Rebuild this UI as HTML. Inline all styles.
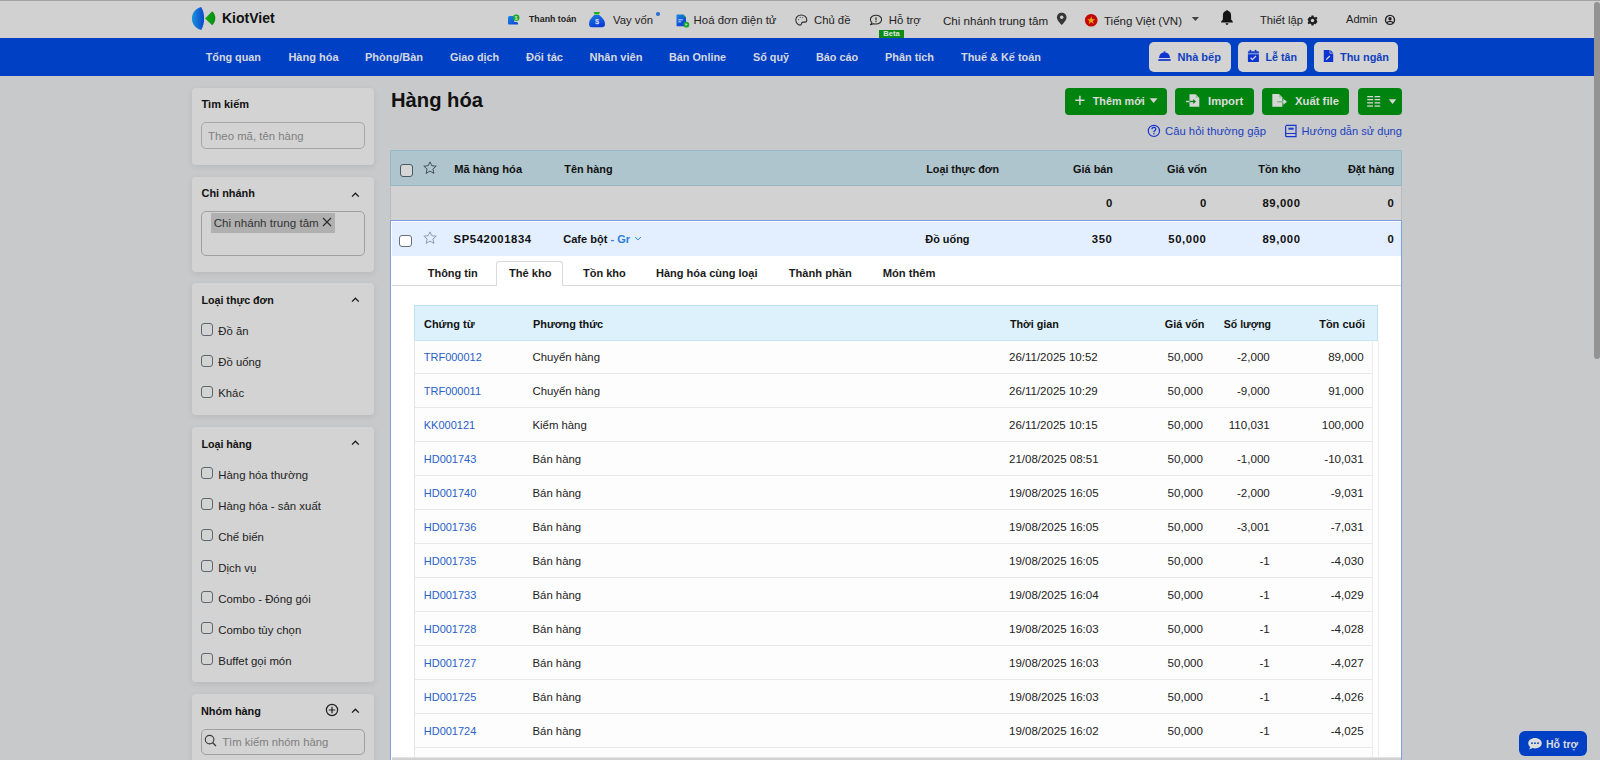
<!DOCTYPE html><html><head><meta charset="utf-8"><title>Hàng hóa</title><style>
*{box-sizing:border-box}
html,body{margin:0;padding:0;width:1600px;height:760px;overflow:hidden;background:#c8c9cb;font-family:"Liberation Sans",sans-serif}
.t{position:absolute;white-space:nowrap;line-height:20px}
.a{position:absolute}
svg{position:absolute;overflow:visible}
</style></head><body>
<div style="position:absolute;left:0px;top:0px;width:1600px;height:38px;background:#d1d1d1"></div>
<div style="position:absolute;left:0px;top:0px;width:1600px;height:1px;background:#a2a3a3"></div>
<svg style="left:191px;top:7px" width="26" height="24" viewBox="0 0 26 24"><defs><linearGradient id="lg" x1="0" y1="0" x2="1" y2="0"><stop offset="0" stop-color="#1a94d8"/><stop offset="1" stop-color="#0a45d0"/></linearGradient><linearGradient id="lg2" x1="0" y1="0" x2="1" y2="0"><stop offset="0" stop-color="#12b012"/><stop offset="1" stop-color="#088a12"/></linearGradient></defs><path d="M10.2 -0.1 C4.2 1.6 0.9 6.2 0.9 11.6 C0.9 17 4.2 21.4 10.2 23 C12.3 19.6 13.1 15.6 13.1 11.5 C13.1 7.4 12.3 3.4 10.2 -0.1Z" fill="url(#lg)"/><path d="M14 11.4 L21.2 4.2 C23.2 6 24.3 8.6 24.3 11.3 C24.3 14 23.2 16.5 21.2 18.3Z" fill="url(#lg2)"/></svg>
<div class="t" style="left:222px;top:7.75px;font-size:14px;font-weight:700;color:#111;">KiotViet</div>
<div class="t" style="left:529px;top:8.95px;font-size:8.8px;font-weight:700;color:#222;">Thanh toán</div>
<div class="t" style="left:613px;top:9.58px;font-size:11.3px;font-weight:400;color:#222;">Vay vốn</div>
<div class="t" style="left:693.6px;top:10.25px;font-size:11.4px;font-weight:400;color:#222;">Hoá đơn điện tử</div>
<div class="t" style="left:814px;top:10.28px;font-size:11.3px;font-weight:400;color:#222;">Chủ đề</div>
<div class="t" style="left:888.7px;top:10.25px;font-size:11.4px;font-weight:400;color:#222;">Hỗ trợ</div>
<div style="position:absolute;left:879px;top:30px;width:25px;height:8.4px;background:#0b8a16"></div>
<div class="t" style="left:879px;top:24.37px;font-size:7.6px;font-weight:700;color:#dfe9df;width:25px;text-align:center">Beta</div>
<div class="t" style="left:943px;top:10.58px;font-size:11.6px;font-weight:400;color:#222;">Chi nhánh trung tâm</div>
<div class="t" style="left:1104px;top:10.62px;font-size:11.5px;font-weight:400;color:#222;">Tiếng Việt (VN)</div>
<div class="t" style="left:1260px;top:10.32px;font-size:11.2px;font-weight:400;color:#222;">Thiết lập</div>
<div class="t" style="left:1346px;top:9.15px;font-size:11.1px;font-weight:400;color:#222;">Admin</div>
<div style="position:absolute;left:0px;top:38.4px;width:1600px;height:37.3px;background:#0040c4"></div>
<div class="t" style="left:205.7px;top:47.26px;font-size:10.8px;font-weight:700;color:#d6d8e0;">Tổng quan</div>
<div class="t" style="left:288.4px;top:47.19px;font-size:11px;font-weight:700;color:#d6d8e0;">Hàng hóa</div>
<div class="t" style="left:365px;top:47.19px;font-size:11px;font-weight:700;color:#d6d8e0;">Phòng/Bàn</div>
<div class="t" style="left:450px;top:47.28px;font-size:10.75px;font-weight:700;color:#d6d8e0;">Giao dịch</div>
<div class="t" style="left:526px;top:47.15px;font-size:11.1px;font-weight:700;color:#d6d8e0;">Đối tác</div>
<div class="t" style="left:589.5px;top:47.15px;font-size:11.1px;font-weight:700;color:#d6d8e0;">Nhân viên</div>
<div class="t" style="left:669px;top:47.26px;font-size:10.8px;font-weight:700;color:#d6d8e0;">Bán Online</div>
<div class="t" style="left:753px;top:47.26px;font-size:10.8px;font-weight:700;color:#d6d8e0;">Sổ quỹ</div>
<div class="t" style="left:816px;top:47.26px;font-size:10.8px;font-weight:700;color:#d6d8e0;">Báo cáo</div>
<div class="t" style="left:885px;top:47.22px;font-size:10.9px;font-weight:700;color:#d6d8e0;">Phân tích</div>
<div class="t" style="left:961px;top:47.22px;font-size:10.9px;font-weight:700;color:#d6d8e0;">Thuế &amp; Kế toán</div>
<div style="position:absolute;left:1149px;top:42px;width:82px;height:30px;background:#d3d3d3;border-radius:5px"></div>
<div style="position:absolute;left:1238px;top:42px;width:69px;height:30px;background:#d3d3d3;border-radius:5px"></div>
<div style="position:absolute;left:1314px;top:42px;width:84px;height:30px;background:#d3d3d3;border-radius:5px"></div>
<div class="t" style="left:1177.5px;top:47.19px;font-size:11px;font-weight:700;color:#0f3fc0;">Nhà bếp</div>
<div class="t" style="left:1265.5px;top:47.29px;font-size:10.7px;font-weight:700;color:#0f3fc0;">Lễ tân</div>
<div class="t" style="left:1340px;top:47.22px;font-size:10.9px;font-weight:700;color:#0f3fc0;">Thu ngân</div>
<div style="position:absolute;left:1594px;top:1.5px;width:6px;height:357.3px;background:#939393;border-radius:3px"></div>
<div style="position:absolute;left:192px;top:87.5px;width:182px;height:77.5px;background:#d3d3d3;border-radius:4px;box-shadow:0 2px 6px rgba(0,0,0,0.08)"></div>
<div style="position:absolute;left:192px;top:177px;width:182px;height:94.5px;background:#d3d3d3;border-radius:4px;box-shadow:0 2px 6px rgba(0,0,0,0.08)"></div>
<div style="position:absolute;left:192px;top:283.2px;width:182px;height:131.5px;background:#d3d3d3;border-radius:4px;box-shadow:0 2px 6px rgba(0,0,0,0.08)"></div>
<div style="position:absolute;left:192px;top:426.7px;width:182px;height:255.3px;background:#d3d3d3;border-radius:4px;box-shadow:0 2px 6px rgba(0,0,0,0.08)"></div>
<div style="position:absolute;left:192px;top:693.7px;width:182px;height:106.29999999999995px;background:#d3d3d3;border-radius:4px;box-shadow:0 2px 6px rgba(0,0,0,0.08)"></div>
<div class="t" style="left:201.4px;top:94.19px;font-size:11px;font-weight:700;color:#111;">Tìm kiếm</div>
<div style="position:absolute;left:201px;top:122px;width:164px;height:27px;border:1px solid #a6a6a6;border-radius:5px"></div>
<div class="t" style="left:208px;top:125.95px;font-size:11.4px;font-weight:400;color:#808080;">Theo mã, tên hàng</div>
<div class="t" style="left:201.6px;top:183.42px;font-size:10.9px;font-weight:700;color:#111;">Chi nhánh</div>
<div style="position:absolute;left:201px;top:211px;width:164px;height:45px;border:1px solid #a0a0a0;border-radius:5px"></div>
<div style="position:absolute;left:211px;top:213.4px;width:124px;height:19.3px;background:#b0b0b0"></div>
<div class="t" style="left:213.7px;top:213.48px;font-size:11.6px;font-weight:400;color:#333;">Chi nhánh trung tâm</div>
<div class="t" style="left:201.4px;top:290.49px;font-size:10.7px;font-weight:700;color:#111;">Loại thực đơn</div>
<div style="position:absolute;left:201px;top:323.4px;width:12.2px;height:12.2px;border:1.1px solid #5f6670;border-radius:3px"></div>
<div class="t" style="left:218.3px;top:320.68px;font-size:11.3px;font-weight:400;color:#222;">Đồ ăn</div>
<div style="position:absolute;left:201px;top:354.59999999999997px;width:12.2px;height:12.2px;border:1.1px solid #5f6670;border-radius:3px"></div>
<div class="t" style="left:218.3px;top:351.88px;font-size:11.3px;font-weight:400;color:#222;">Đồ uống</div>
<div style="position:absolute;left:201px;top:385.79999999999995px;width:12.2px;height:12.2px;border:1.1px solid #5f6670;border-radius:3px"></div>
<div class="t" style="left:218.3px;top:383.08px;font-size:11.3px;font-weight:400;color:#222;">Khác</div>
<div class="t" style="left:201.4px;top:433.69px;font-size:10.7px;font-weight:700;color:#111;">Loại hàng</div>
<div style="position:absolute;left:201px;top:467.3px;width:12.2px;height:12.2px;border:1.1px solid #5f6670;border-radius:3px"></div>
<div class="t" style="left:218.3px;top:464.55px;font-size:11.4px;font-weight:400;color:#222;">Hàng hóa thường</div>
<div style="position:absolute;left:201px;top:498.3px;width:12.2px;height:12.2px;border:1.1px solid #5f6670;border-radius:3px"></div>
<div class="t" style="left:218.3px;top:495.55px;font-size:11.4px;font-weight:400;color:#222;">Hàng hóa - sản xuất</div>
<div style="position:absolute;left:201px;top:529.3px;width:12.2px;height:12.2px;border:1.1px solid #5f6670;border-radius:3px"></div>
<div class="t" style="left:218.3px;top:526.55px;font-size:11.4px;font-weight:400;color:#222;">Chế biến</div>
<div style="position:absolute;left:201px;top:560.3px;width:12.2px;height:12.2px;border:1.1px solid #5f6670;border-radius:3px"></div>
<div class="t" style="left:218.3px;top:557.55px;font-size:11.4px;font-weight:400;color:#222;">Dịch vụ</div>
<div style="position:absolute;left:201px;top:591.3px;width:12.2px;height:12.2px;border:1.1px solid #5f6670;border-radius:3px"></div>
<div class="t" style="left:218.3px;top:588.55px;font-size:11.4px;font-weight:400;color:#222;">Combo - Đóng gói</div>
<div style="position:absolute;left:201px;top:622.3px;width:12.2px;height:12.2px;border:1.1px solid #5f6670;border-radius:3px"></div>
<div class="t" style="left:218.3px;top:619.55px;font-size:11.4px;font-weight:400;color:#222;">Combo tùy chọn</div>
<div style="position:absolute;left:201px;top:653.3px;width:12.2px;height:12.2px;border:1.1px solid #5f6670;border-radius:3px"></div>
<div class="t" style="left:218.3px;top:650.55px;font-size:11.4px;font-weight:400;color:#222;">Buffet gọi món</div>
<div class="t" style="left:201px;top:701.22px;font-size:10.9px;font-weight:700;color:#111;">Nhóm hàng</div>
<div style="position:absolute;left:201px;top:728.6px;width:164px;height:26px;border:1px solid #a0a0a0;border-radius:5px"></div>
<div class="t" style="left:222.2px;top:731.58px;font-size:11.3px;font-weight:400;color:#808080;">Tìm kiếm nhóm hàng</div>
<div class="t" style="left:391px;top:90.10px;font-size:20.2px;font-weight:700;color:#111;">Hàng hóa</div>
<div style="position:absolute;left:1065px;top:88px;width:102px;height:27px;background:#01840f;border-radius:4px"></div>
<div style="position:absolute;left:1175px;top:88px;width:79px;height:27px;background:#01840f;border-radius:4px"></div>
<div style="position:absolute;left:1262px;top:88px;width:87px;height:27px;background:#01840f;border-radius:4px"></div>
<div style="position:absolute;left:1358px;top:88px;width:44px;height:27px;background:#01840f;border-radius:4px"></div>
<div class="t" style="left:1092.75px;top:90.86px;font-size:10.8px;font-weight:700;color:#dcdcdc;">Thêm mới</div>
<div class="t" style="left:1208px;top:90.68px;font-size:11.3px;font-weight:700;color:#dcdcdc;">Import</div>
<div class="t" style="left:1295px;top:90.68px;font-size:11.3px;font-weight:700;color:#dcdcdc;">Xuất file</div>
<div class="t" style="left:1165px;top:120.58px;font-size:11.3px;font-weight:400;color:#1b3fc0;">Câu hỏi thường gặp</div>
<div class="t" style="left:1301.5px;top:120.65px;font-size:11.1px;font-weight:400;color:#1b3fc0;">Hướng dẫn sử dụng</div>
<div style="position:absolute;left:390px;top:150px;width:1012px;height:36px;background:#aec5cd;border:1px solid #98b8c8"></div>
<div style="position:absolute;left:390px;top:186px;width:1012px;height:34px;background:#d2d2d2;border-left:1px solid #bcbcbc;border-right:1px solid #bcbcbc"></div>
<div style="position:absolute;left:400px;top:164px;width:12.6px;height:12.6px;border:1.2px solid #4b5866;border-radius:3px;background:#d6d6d6"></div>
<div class="t" style="left:454.25px;top:158.65px;font-size:11.1px;font-weight:700;color:#111;">Mã hàng hóa</div>
<div class="t" style="left:564.25px;top:158.74px;font-size:10.86px;font-weight:700;color:#111;">Tên hàng</div>
<div class="t" style="left:926.3px;top:158.88px;font-size:10.74px;font-weight:700;color:#111;">Loại thực đơn</div>
<div class="t" style="right:487px;top:158.62px;font-size:10.9px;font-weight:700;color:#111;">Giá bán</div>
<div class="t" style="right:393px;top:158.62px;font-size:10.9px;font-weight:700;color:#111;">Giá vốn</div>
<div class="t" style="right:299.4000000000001px;top:158.62px;font-size:10.9px;font-weight:700;color:#111;">Tồn kho</div>
<div class="t" style="right:205.5px;top:158.62px;font-size:10.9px;font-weight:700;color:#111;">Đặt hàng</div>
<div class="t" style="right:487px;top:192.88px;font-size:11.3px;font-weight:700;color:#111;letter-spacing:0.6px">0</div>
<div class="t" style="right:393px;top:192.88px;font-size:11.3px;font-weight:700;color:#111;letter-spacing:0.6px">0</div>
<div class="t" style="right:299.4000000000001px;top:192.88px;font-size:11.3px;font-weight:700;color:#111;letter-spacing:0.6px">89,000</div>
<div class="t" style="right:205.5px;top:192.88px;font-size:11.3px;font-weight:700;color:#111;letter-spacing:0.6px">0</div>
<div style="position:absolute;left:390px;top:220px;width:1012px;height:540px;background:#fff;border:1.5px solid #7d9ee0;border-bottom:none"></div>
<div style="position:absolute;left:391.5px;top:221.5px;width:1009px;height:34.5px;background:#e3efff"></div>
<div style="position:absolute;left:399px;top:234.8px;width:12.6px;height:12.6px;border:1.2px solid #656f7b;border-radius:3px;background:#fff"></div>
<div class="t" style="left:453.5px;top:228.58px;font-size:11.3px;font-weight:700;color:#111;letter-spacing:0.6px">SP542001834</div>
<div class="t" style="left:563.25px;top:228.67px;font-size:11.06px;font-weight:700;color:#111;">Cafe bột <span style="color:#2f7fd8">- Gr</span></div>
<div class="t" style="left:925.3px;top:228.92px;font-size:10.9px;font-weight:700;color:#111;">Đồ uống</div>
<div class="t" style="right:487.5px;top:229.08px;font-size:11.3px;font-weight:700;color:#111;letter-spacing:0.6px">350</div>
<div class="t" style="right:393.5px;top:229.08px;font-size:11.3px;font-weight:700;color:#111;letter-spacing:0.6px">50,000</div>
<div class="t" style="right:299.4000000000001px;top:229.08px;font-size:11.3px;font-weight:700;color:#111;letter-spacing:0.6px">89,000</div>
<div class="t" style="right:205.5px;top:229.08px;font-size:11.3px;font-weight:700;color:#111;letter-spacing:0.6px">0</div>
<div style="position:absolute;left:391.5px;top:285px;width:1009px;height:1px;background:#dadada"></div>
<div style="position:absolute;left:496.4px;top:260.6px;width:67px;height:25.4px;background:#fff;border:1px solid #dadada;border-bottom:none;border-radius:3px 3px 0 0"></div>
<div class="t" style="left:427.7px;top:262.59px;font-size:11px;font-weight:700;color:#1a1a1a;">Thông tin</div>
<div class="t" style="left:509px;top:262.55px;font-size:11.1px;font-weight:700;color:#1a1a1a;">Thẻ kho</div>
<div class="t" style="left:583px;top:262.59px;font-size:11px;font-weight:700;color:#1a1a1a;">Tồn kho</div>
<div class="t" style="left:656px;top:262.59px;font-size:11px;font-weight:700;color:#1a1a1a;">Hàng hóa cùng loại</div>
<div class="t" style="left:788.8px;top:262.55px;font-size:11.1px;font-weight:700;color:#1a1a1a;">Thành phần</div>
<div class="t" style="left:882.7px;top:262.52px;font-size:11.2px;font-weight:700;color:#1a1a1a;">Món thêm</div>
<div style="position:absolute;left:415px;top:340px;width:957px;height:417px;background:#fdfdfd"></div>
<div style="position:absolute;left:414px;top:305px;width:964px;height:35.5px;background:#dcf1fb;border:1px solid #bfe0f0;border-bottom-color:#c8e4f0"></div>
<div style="position:absolute;left:414px;top:340px;width:1px;height:420px;background:#e6e6e6"></div>
<div style="position:absolute;left:1371.5px;top:340px;width:1px;height:420px;background:#ececec"></div>
<div class="t" style="left:424px;top:313.60px;font-size:10.97px;font-weight:700;color:#111;">Chứng từ</div>
<div class="t" style="left:533px;top:313.62px;font-size:10.9px;font-weight:700;color:#111;">Phương thức</div>
<div class="t" style="left:1010px;top:313.88px;font-size:10.74px;font-weight:700;color:#111;">Thời gian</div>
<div class="t" style="right:395.5px;top:313.84px;font-size:10.85px;font-weight:700;color:#111;">Giá vốn</div>
<div class="t" style="right:329px;top:313.96px;font-size:10.5px;font-weight:700;color:#111;">Số lượng</div>
<div class="t" style="right:235px;top:313.79px;font-size:11px;font-weight:700;color:#111;">Tồn cuối</div>
<div style="position:absolute;left:415px;top:373px;width:956.5px;height:1px;background:#e8e8e8"></div>
<div class="t" style="left:423.75px;top:347.39px;font-size:11.0px;font-weight:400;color:#2a5fc8;">TRF000012</div>
<div class="t" style="left:532.5px;top:347.27px;font-size:11.35px;font-weight:400;color:#222;">Chuyển hàng</div>
<div class="t" style="left:1009px;top:347.22px;font-size:11.5px;font-weight:400;color:#222;">26/11/2025 10:52</div>
<div class="t" style="right:397px;top:347.18px;font-size:11.6px;font-weight:400;color:#222;">50,000</div>
<div class="t" style="right:330.20000000000005px;top:347.18px;font-size:11.6px;font-weight:400;color:#222;">-2,000</div>
<div class="t" style="right:236.4000000000001px;top:347.18px;font-size:11.6px;font-weight:400;color:#222;">89,000</div>
<div style="position:absolute;left:415px;top:407px;width:956.5px;height:1px;background:#e8e8e8"></div>
<div class="t" style="left:423.75px;top:381.39px;font-size:11.0px;font-weight:400;color:#2a5fc8;">TRF000011</div>
<div class="t" style="left:532.5px;top:381.27px;font-size:11.35px;font-weight:400;color:#222;">Chuyển hàng</div>
<div class="t" style="left:1009px;top:381.22px;font-size:11.5px;font-weight:400;color:#222;">26/11/2025 10:29</div>
<div class="t" style="right:397px;top:381.18px;font-size:11.6px;font-weight:400;color:#222;">50,000</div>
<div class="t" style="right:330.20000000000005px;top:381.18px;font-size:11.6px;font-weight:400;color:#222;">-9,000</div>
<div class="t" style="right:236.4000000000001px;top:381.18px;font-size:11.6px;font-weight:400;color:#222;">91,000</div>
<div style="position:absolute;left:415px;top:441px;width:956.5px;height:1px;background:#e8e8e8"></div>
<div class="t" style="left:423.75px;top:415.39px;font-size:11.0px;font-weight:400;color:#2a5fc8;">KK000121</div>
<div class="t" style="left:532.5px;top:415.27px;font-size:11.35px;font-weight:400;color:#222;">Kiểm hàng</div>
<div class="t" style="left:1009px;top:415.22px;font-size:11.5px;font-weight:400;color:#222;">26/11/2025 10:15</div>
<div class="t" style="right:397px;top:415.18px;font-size:11.6px;font-weight:400;color:#222;">50,000</div>
<div class="t" style="right:330.20000000000005px;top:415.18px;font-size:11.6px;font-weight:400;color:#222;">110,031</div>
<div class="t" style="right:236.4000000000001px;top:415.18px;font-size:11.6px;font-weight:400;color:#222;">100,000</div>
<div style="position:absolute;left:415px;top:475px;width:956.5px;height:1px;background:#e8e8e8"></div>
<div class="t" style="left:423.75px;top:449.39px;font-size:11.0px;font-weight:400;color:#2a5fc8;">HD001743</div>
<div class="t" style="left:532.5px;top:449.27px;font-size:11.35px;font-weight:400;color:#222;">Bán hàng</div>
<div class="t" style="left:1009px;top:449.22px;font-size:11.5px;font-weight:400;color:#222;">21/08/2025 08:51</div>
<div class="t" style="right:397px;top:449.18px;font-size:11.6px;font-weight:400;color:#222;">50,000</div>
<div class="t" style="right:330.20000000000005px;top:449.18px;font-size:11.6px;font-weight:400;color:#222;">-1,000</div>
<div class="t" style="right:236.4000000000001px;top:449.18px;font-size:11.6px;font-weight:400;color:#222;">-10,031</div>
<div style="position:absolute;left:415px;top:509px;width:956.5px;height:1px;background:#e8e8e8"></div>
<div class="t" style="left:423.75px;top:483.39px;font-size:11.0px;font-weight:400;color:#2a5fc8;">HD001740</div>
<div class="t" style="left:532.5px;top:483.27px;font-size:11.35px;font-weight:400;color:#222;">Bán hàng</div>
<div class="t" style="left:1009px;top:483.22px;font-size:11.5px;font-weight:400;color:#222;">19/08/2025 16:05</div>
<div class="t" style="right:397px;top:483.18px;font-size:11.6px;font-weight:400;color:#222;">50,000</div>
<div class="t" style="right:330.20000000000005px;top:483.18px;font-size:11.6px;font-weight:400;color:#222;">-2,000</div>
<div class="t" style="right:236.4000000000001px;top:483.18px;font-size:11.6px;font-weight:400;color:#222;">-9,031</div>
<div style="position:absolute;left:415px;top:543px;width:956.5px;height:1px;background:#e8e8e8"></div>
<div class="t" style="left:423.75px;top:517.39px;font-size:11.0px;font-weight:400;color:#2a5fc8;">HD001736</div>
<div class="t" style="left:532.5px;top:517.27px;font-size:11.35px;font-weight:400;color:#222;">Bán hàng</div>
<div class="t" style="left:1009px;top:517.22px;font-size:11.5px;font-weight:400;color:#222;">19/08/2025 16:05</div>
<div class="t" style="right:397px;top:517.18px;font-size:11.6px;font-weight:400;color:#222;">50,000</div>
<div class="t" style="right:330.20000000000005px;top:517.18px;font-size:11.6px;font-weight:400;color:#222;">-3,001</div>
<div class="t" style="right:236.4000000000001px;top:517.18px;font-size:11.6px;font-weight:400;color:#222;">-7,031</div>
<div style="position:absolute;left:415px;top:577px;width:956.5px;height:1px;background:#e8e8e8"></div>
<div class="t" style="left:423.75px;top:551.39px;font-size:11.0px;font-weight:400;color:#2a5fc8;">HD001735</div>
<div class="t" style="left:532.5px;top:551.27px;font-size:11.35px;font-weight:400;color:#222;">Bán hàng</div>
<div class="t" style="left:1009px;top:551.22px;font-size:11.5px;font-weight:400;color:#222;">19/08/2025 16:05</div>
<div class="t" style="right:397px;top:551.18px;font-size:11.6px;font-weight:400;color:#222;">50,000</div>
<div class="t" style="right:330.20000000000005px;top:551.18px;font-size:11.6px;font-weight:400;color:#222;">-1</div>
<div class="t" style="right:236.4000000000001px;top:551.18px;font-size:11.6px;font-weight:400;color:#222;">-4,030</div>
<div style="position:absolute;left:415px;top:611px;width:956.5px;height:1px;background:#e8e8e8"></div>
<div class="t" style="left:423.75px;top:585.39px;font-size:11.0px;font-weight:400;color:#2a5fc8;">HD001733</div>
<div class="t" style="left:532.5px;top:585.27px;font-size:11.35px;font-weight:400;color:#222;">Bán hàng</div>
<div class="t" style="left:1009px;top:585.22px;font-size:11.5px;font-weight:400;color:#222;">19/08/2025 16:04</div>
<div class="t" style="right:397px;top:585.18px;font-size:11.6px;font-weight:400;color:#222;">50,000</div>
<div class="t" style="right:330.20000000000005px;top:585.18px;font-size:11.6px;font-weight:400;color:#222;">-1</div>
<div class="t" style="right:236.4000000000001px;top:585.18px;font-size:11.6px;font-weight:400;color:#222;">-4,029</div>
<div style="position:absolute;left:415px;top:645px;width:956.5px;height:1px;background:#e8e8e8"></div>
<div class="t" style="left:423.75px;top:619.39px;font-size:11.0px;font-weight:400;color:#2a5fc8;">HD001728</div>
<div class="t" style="left:532.5px;top:619.27px;font-size:11.35px;font-weight:400;color:#222;">Bán hàng</div>
<div class="t" style="left:1009px;top:619.22px;font-size:11.5px;font-weight:400;color:#222;">19/08/2025 16:03</div>
<div class="t" style="right:397px;top:619.18px;font-size:11.6px;font-weight:400;color:#222;">50,000</div>
<div class="t" style="right:330.20000000000005px;top:619.18px;font-size:11.6px;font-weight:400;color:#222;">-1</div>
<div class="t" style="right:236.4000000000001px;top:619.18px;font-size:11.6px;font-weight:400;color:#222;">-4,028</div>
<div style="position:absolute;left:415px;top:679px;width:956.5px;height:1px;background:#e8e8e8"></div>
<div class="t" style="left:423.75px;top:653.39px;font-size:11.0px;font-weight:400;color:#2a5fc8;">HD001727</div>
<div class="t" style="left:532.5px;top:653.27px;font-size:11.35px;font-weight:400;color:#222;">Bán hàng</div>
<div class="t" style="left:1009px;top:653.22px;font-size:11.5px;font-weight:400;color:#222;">19/08/2025 16:03</div>
<div class="t" style="right:397px;top:653.18px;font-size:11.6px;font-weight:400;color:#222;">50,000</div>
<div class="t" style="right:330.20000000000005px;top:653.18px;font-size:11.6px;font-weight:400;color:#222;">-1</div>
<div class="t" style="right:236.4000000000001px;top:653.18px;font-size:11.6px;font-weight:400;color:#222;">-4,027</div>
<div style="position:absolute;left:415px;top:713px;width:956.5px;height:1px;background:#e8e8e8"></div>
<div class="t" style="left:423.75px;top:687.39px;font-size:11.0px;font-weight:400;color:#2a5fc8;">HD001725</div>
<div class="t" style="left:532.5px;top:687.27px;font-size:11.35px;font-weight:400;color:#222;">Bán hàng</div>
<div class="t" style="left:1009px;top:687.22px;font-size:11.5px;font-weight:400;color:#222;">19/08/2025 16:03</div>
<div class="t" style="right:397px;top:687.18px;font-size:11.6px;font-weight:400;color:#222;">50,000</div>
<div class="t" style="right:330.20000000000005px;top:687.18px;font-size:11.6px;font-weight:400;color:#222;">-1</div>
<div class="t" style="right:236.4000000000001px;top:687.18px;font-size:11.6px;font-weight:400;color:#222;">-4,026</div>
<div style="position:absolute;left:415px;top:747px;width:956.5px;height:1px;background:#e8e8e8"></div>
<div class="t" style="left:423.75px;top:721.39px;font-size:11.0px;font-weight:400;color:#2a5fc8;">HD001724</div>
<div class="t" style="left:532.5px;top:721.27px;font-size:11.35px;font-weight:400;color:#222;">Bán hàng</div>
<div class="t" style="left:1009px;top:721.22px;font-size:11.5px;font-weight:400;color:#222;">19/08/2025 16:02</div>
<div class="t" style="right:397px;top:721.18px;font-size:11.6px;font-weight:400;color:#222;">50,000</div>
<div class="t" style="right:330.20000000000005px;top:721.18px;font-size:11.6px;font-weight:400;color:#222;">-1</div>
<div class="t" style="right:236.4000000000001px;top:721.18px;font-size:11.6px;font-weight:400;color:#222;">-4,025</div>
<div style="position:absolute;left:391.5px;top:756.5px;width:1009.5px;height:3.5px;background:linear-gradient(#e8e8e8,#d0d0d0 60%)"></div>
<div style="position:absolute;left:1377.5px;top:340px;width:1px;height:417px;background:#ececec"></div>
<div style="position:absolute;left:1519px;top:731px;width:68px;height:25px;background:#0040c4;border-radius:6px"></div>
<div class="t" style="left:1546px;top:733.86px;font-size:10.5px;font-weight:700;color:#dcdcdc;">Hỗ trợ</div>
<svg style="left:507px;top:14px" width="14" height="12" viewBox="0 0 14 12"><defs><linearGradient id="g1" x1="0" y1="0" x2="1" y2="1"><stop offset="0" stop-color="#1c86e6"/><stop offset="1" stop-color="#0b3fd6"/></linearGradient></defs><path d="M1 3.5 Q1 2 2.5 2 L5.5 2 Q7 2 7 3.5 L7 7 Q7 8 8 8 L9.5 8 Q11 8 11 9.5 L11 10 Q11 10.5 10.5 10.5 L2 10.5 Q1 10.5 1 9.5Z" fill="url(#g1)"/><circle cx="9.2" cy="3.8" r="3.2" fill="#16a526"/><text x="9.2" y="5.6" font-size="4.8" font-family="Liberation Sans" font-weight="700" fill="#cfe8cf" text-anchor="middle">$</text></svg>
<svg style="left:588px;top:11px" width="18" height="17" viewBox="0 0 18 17"><path d="M5.5 1 L12 1 L10.8 3.6 L6.7 3.6Z" fill="#1bb21b"/><path d="M6.3 4 L11.2 4 Q17 8.5 17 13 Q17 16.2 14 16.2 L4 16.2 Q1 16.2 1 13 Q1 8.5 6.3 4Z" fill="url(#g2)"/><defs><linearGradient id="g2" x1="0" y1="0" x2="0.3" y2="1"><stop offset="0" stop-color="#1b78e2"/><stop offset="1" stop-color="#0b40d4"/></linearGradient></defs><text x="9" y="13.4" font-size="7.5" font-family="Liberation Sans" font-weight="700" fill="#d5dcf0" text-anchor="middle">$</text></svg>
<svg style="left:655px;top:11px" width="6" height="6" viewBox="0 0 6 6"><circle cx="3" cy="3" r="2.1" fill="#2a6fd6"/></svg>
<svg style="left:675px;top:13px" width="16" height="16" viewBox="0 0 16 16"><path d="M1.5 2.5 Q1.5 1.6 2.5 1.6 L8.3 1.6 L11 4.3 L11 12.4 Q11 13.3 10 13.3 L2.5 13.3 Q1.5 13.3 1.5 12.4Z" fill="url(#g3)"/><defs><linearGradient id="g3" x1="0" y1="0" x2="0.6" y2="1"><stop offset="0" stop-color="#1b84e4"/><stop offset="1" stop-color="#0b3fd4"/></linearGradient></defs><path d="M8.3 1.6 L11 4.3 L8.3 4.3Z" fill="#18a52a"/><rect x="3.3" y="6.3" width="4.5" height="1" fill="#c9d6ee"/><rect x="3.3" y="8.3" width="2.8" height="1" fill="#c9d6ee"/><circle cx="11.4" cy="11.7" r="2.9" fill="#1ca92c"/><path d="M10.5 10.3 L12.6 11.5 L10.5 12.7Z" fill="#cde8cd"/></svg>
<svg style="left:795px;top:14px" width="13" height="12" viewBox="0 0 13 12"><path d="M6.3 0.9 C3 0.9 0.8 3.3 0.8 6.1 C0.8 9 3 11.1 5.2 11.1 C6.2 11.1 6.5 10.5 6.5 9.8 C6.5 8.7 7 8.1 8.2 8.1 L9.8 8.1 C11.2 8.1 11.8 7.2 11.8 5.9 C11.8 3 9.3 0.9 6.3 0.9Z" fill="none" stroke="#2a2a2a" stroke-width="1.05"/><circle cx="3.6" cy="5.6" r="0.6" fill="#555"/><circle cx="5.2" cy="3.4" r="0.6" fill="#555"/><circle cx="7.8" cy="3.6" r="0.6" fill="#555"/></svg>
<svg style="left:869px;top:14px" width="14" height="12" viewBox="0 0 14 12"><path d="M7 1.2 C3.8 1.2 1.4 3.2 1.4 5.6 C1.4 6.9 2 8 3 8.8 L1.4 10.8 L4.6 9.7 C5.4 9.95 6.2 10.05 7 10.05 C10.2 10.05 12.6 8 12.6 5.6 C12.6 3.2 10.2 1.2 7 1.2Z" fill="none" stroke="#2a2a2a" stroke-width="1.05" stroke-linejoin="round"/><rect x="6.45" y="3.2" width="1.1" height="3.2" fill="#3a2020"/><rect x="6.45" y="7.1" width="1.1" height="1.1" fill="#3a2020"/></svg>
<svg style="left:1056px;top:12px" width="12" height="14" viewBox="0 0 12 14"><path d="M5.7 0.8 C2.9 0.8 0.9 2.9 0.9 5.4 C0.9 8.3 5.7 12.9 5.7 12.9 C5.7 12.9 10.5 8.3 10.5 5.4 C10.5 2.9 8.5 0.8 5.7 0.8Z" fill="#363636"/><circle cx="5.7" cy="5.2" r="1.7" fill="#d1d1d1"/></svg>
<svg style="left:1084px;top:13px" width="14" height="14" viewBox="0 0 14 14"><circle cx="7.2" cy="7.3" r="6.3" fill="#c40606"/><path d="M7.2 3.3 L8.2 6.2 L11.2 6.2 L8.8 8 L9.7 10.9 L7.2 9.1 L4.7 10.9 L5.6 8 L3.2 6.2 L6.2 6.2Z" fill="#e2ae08"/></svg>
<svg style="left:1191px;top:16px" width="9" height="6" viewBox="0 0 9 6"><path d="M0.8 1 L8 1 L4.4 5Z" fill="#444"/></svg>
<svg style="left:1219px;top:9px" width="16" height="18" viewBox="0 0 16 18"><path d="M8 0.9 C8.5 0.9 8.8 1.3 8.8 1.8 C11.3 2.3 12.1 4.3 12.1 6.6 L12.1 10.4 L13.8 12.5 L13.8 13.4 L2.2 13.4 L2.2 12.5 L3.9 10.4 L3.9 6.6 C3.9 4.3 4.7 2.3 7.2 1.8 C7.2 1.3 7.5 0.9 8 0.9Z" fill="#141414"/><path d="M6.5 14.2 L9.5 14.2 Q9.3 16 8 16 Q6.7 16 6.5 14.2Z" fill="#141414"/></svg>
<svg style="left:1307px;top:15px" width="11" height="11" viewBox="0 0 11 11"><g transform="translate(5.5 5.5)"><path d="M-1 -5 L1 -5 L1.3 -3.6 L2.6 -3 L3.8 -3.8 L5 -2.4 L4 -1.3 L4.3 0 L5 1.3 L4 2.6 L3 3.8 L1.4 3.3 L1 5 L-1 5 L-1.3 3.6 L-2.6 3 L-3.8 3.8 L-5 2.4 L-4 1.3 L-4.3 0 L-5 -1.3 L-3.8 -2.6 L-3 -3.8 L-1.4 -3.3Z" fill="#1e1e1e"/><circle r="1.7" fill="#d1d1d1"/></g></svg>
<svg style="left:1384px;top:14px" width="12" height="12" viewBox="0 0 12 12"><circle cx="6" cy="5.9" r="4.5" fill="none" stroke="#222" stroke-width="1.4"/><circle cx="6" cy="4.7" r="1.7" fill="#222"/><path d="M2.9 8.9 Q3.8 7.4 6 7.4 Q8.2 7.4 9.1 8.9" fill="none" stroke="#222" stroke-width="1.3"/></svg>
<svg style="left:1157px;top:50px" width="15" height="12" viewBox="0 0 15 12"><rect x="6.6" y="1.4" width="1.8" height="1.4" fill="#0d33d0"/><path d="M2 8 Q2.5 2.6 7.5 2.6 Q12.5 2.6 13 8Z" fill="#0d33d0"/><rect x="1.3" y="9" width="12.4" height="2" rx="0.5" fill="#2a4ccc"/></svg>
<svg style="left:1247px;top:49px" width="13" height="14" viewBox="0 0 13 14"><rect x="2.6" y="0.9" width="1.6" height="2.2" fill="#0d33d0"/><rect x="7.8" y="0.9" width="1.6" height="2.2" fill="#0d33d0"/><rect x="0.9" y="2.3" width="11" height="2.2" rx="0.6" fill="#1a44cc"/><path d="M0.9 5.2 L11.9 5.2 L11.9 12.2 Q11.9 13.1 11 13.1 L1.8 13.1 Q0.9 13.1 0.9 12.2Z" fill="#0d33d0"/><path d="M3.6 8.8 L5.4 10.6 L9 7" fill="none" stroke="#d6d6e6" stroke-width="1.3"/></svg>
<svg style="left:1323px;top:49px" width="12" height="14" viewBox="0 0 12 14"><path d="M0.8 1 L6.6 1 L6.6 4.4 L10.2 4.4 L10.2 13 L0.8 13Z" fill="#0d33d0"/><path d="M7.3 1 L10.2 3.8 L7.3 3.8Z" fill="#0d33d0"/><path d="M3.2 10.6 L6.8 7" stroke="#d6d6e6" stroke-width="1.3"/></svg>
<svg style="left:1074px;top:95px" width="12" height="11" viewBox="0 0 12 11"><path d="M5.9 0.7 L5.9 9.9 M1.3 5.3 L10.5 5.3" stroke="#d6d6d6" stroke-width="1.5"/></svg>
<svg style="left:1149px;top:97px" width="9" height="7" viewBox="0 0 9 7"><path d="M0.7 1.2 L8.5 1.2 L4.6 5.9Z" fill="#d6d6d6"/></svg>
<svg style="left:1185px;top:93px" width="16" height="15" viewBox="0 0 16 15"><path d="M4.5 1.2 L10.6 1.2 L14.3 4.9 L14.3 13.8 L4.5 13.8 L4.5 9.3 L4.5 6.2Z" fill="#d6d6d6"/><path d="M10.6 1.2 L14.3 4.9 L10.6 4.9Z" fill="#9fc89f"/><path d="M1 8.5 L8.5 8.5" stroke="#d6d6d6" stroke-width="1.4"/><path d="M4.5 8.5 L9 8.5" stroke="#028117" stroke-width="1.4"/><path d="M8.3 6 L11 8.5 L8.3 11Z" fill="#028117"/></svg>
<svg style="left:1271px;top:93px" width="18" height="15" viewBox="0 0 18 15"><path d="M1.3 1 L7.9 1 L11.4 4.6 L11.4 13.7 L1.3 13.7Z" fill="#d6d6d6"/><path d="M7.9 1 L11.4 4.6 L7.9 4.6Z" fill="#9fc89f"/><path d="M6.2 8.8 L11.4 8.8" stroke="#7fb07f" stroke-width="1.3"/><path d="M11.4 8.8 L13 8.8" stroke="#d6d6d6" stroke-width="1.3"/><path d="M12.3 5.8 L16 8.8 L12.3 11.8Z" fill="#d6d6d6"/></svg>
<svg style="left:1366px;top:95px" width="16" height="13" viewBox="0 0 16 13"><g fill="#d6d6d6"><rect x="1.2" y="1" width="5.8" height="1.3"/><rect x="8.6" y="1" width="5.6" height="1.3"/><rect x="1.2" y="4" width="5.8" height="1.3"/><rect x="8.6" y="4" width="5.6" height="1.3"/><rect x="1.2" y="7.2" width="5.8" height="1.3"/><rect x="8.6" y="7.2" width="5.6" height="1.3"/><rect x="1.2" y="10.4" width="5.8" height="1.3"/><rect x="8.6" y="10.4" width="5.6" height="1.3"/></g></svg>
<svg style="left:1388px;top:98px" width="9" height="7" viewBox="0 0 9 7"><path d="M0.8 1.2 L8.3 1.2 L4.55 5.9Z" fill="#d6d6d6"/></svg>
<svg style="left:1147px;top:124px" width="14" height="14" viewBox="0 0 14 14"><circle cx="6.9" cy="6.9" r="5.6" fill="none" stroke="#1535d0" stroke-width="1.2"/><path d="M5 5.3 Q5 3.4 6.9 3.4 Q8.8 3.4 8.8 5.1 Q8.8 6.2 7.6 6.8 Q6.9 7.2 6.9 8.2" fill="none" stroke="#1535d0" stroke-width="1.3"/><rect x="6.25" y="9.1" width="1.3" height="1.3" fill="#1535d0"/></svg>
<svg style="left:1284px;top:124px" width="14" height="14" viewBox="0 0 14 14"><path d="M2 1.3 L12 1.3 L12 12.6 L2.6 12.6 Q1.6 12.6 1.6 11.6 L1.6 1.8" fill="none" stroke="#1535d0" stroke-width="1.2"/><path d="M1.6 10.6 Q1.6 9.5 2.6 9.5 L12 9.5" fill="none" stroke="#1535d0" stroke-width="1.2"/><rect x="4.4" y="3.7" width="5.3" height="2" fill="#1f40c8"/></svg>
<svg style="left:422.9px;top:161px" width="14" height="14" viewBox="0 0 14 14"><path d="M7 0.9 L8.85 4.75 L13.2 5.15 L9.9 8 L10.9 12.4 L7 10.1 L3.1 12.4 L4.1 8 L0.8 5.15 L5.15 4.75Z" fill="none" stroke="#2a3340" stroke-width="0.8" stroke-linejoin="round"/></svg>
<svg style="left:422.9px;top:231.3px" width="14" height="14" viewBox="0 0 14 14"><path d="M7 0.9 L8.85 4.75 L13.2 5.15 L9.9 8 L10.9 12.4 L7 10.1 L3.1 12.4 L4.1 8 L0.8 5.15 L5.15 4.75Z" fill="none" stroke="#7d8590" stroke-width="0.8" stroke-linejoin="round"/></svg>
<svg style="left:351.2px;top:192px" width="9" height="6" viewBox="0 0 9 6"><path d="M1 4.6 L4.4 1.2 L7.8 4.6" fill="none" stroke="#1a1a1a" stroke-width="1.3"/></svg>
<svg style="left:351.2px;top:296.5px" width="9" height="6" viewBox="0 0 9 6"><path d="M1 4.6 L4.4 1.2 L7.8 4.6" fill="none" stroke="#1a1a1a" stroke-width="1.3"/></svg>
<svg style="left:351.2px;top:439.5px" width="9" height="6" viewBox="0 0 9 6"><path d="M1 4.6 L4.4 1.2 L7.8 4.6" fill="none" stroke="#1a1a1a" stroke-width="1.3"/></svg>
<svg style="left:351.2px;top:707.5px" width="9" height="6" viewBox="0 0 9 6"><path d="M1 4.6 L4.4 1.2 L7.8 4.6" fill="none" stroke="#1a1a1a" stroke-width="1.3"/></svg>
<svg style="left:325px;top:703px" width="14" height="14" viewBox="0 0 14 14"><circle cx="7" cy="7" r="5.6" fill="none" stroke="#1e1e1e" stroke-width="1.2"/><path d="M7 3.8 L7 10.2 M3.8 7 L10.2 7" stroke="#1e1e1e" stroke-width="1.2"/></svg>
<svg style="left:322px;top:217px" width="10" height="10" viewBox="0 0 10 10"><path d="M1 1 L9 9 M9 1 L1 9" stroke="#2a2a2a" stroke-width="1.1"/></svg>
<svg style="left:204px;top:734px" width="13" height="13" viewBox="0 0 13 13"><circle cx="5.6" cy="5.6" r="4.3" fill="none" stroke="#3c3c3c" stroke-width="1.15"/><path d="M8.7 8.7 L12 12" stroke="#3c3c3c" stroke-width="1.3"/></svg>
<svg style="left:634px;top:236px" width="8" height="5" viewBox="0 0 8 5"><path d="M1 1 L4 3.8 L7 1" fill="none" stroke="#2a8ae0" stroke-width="1"/></svg>
<svg style="left:1527px;top:737px" width="16" height="14" viewBox="0 0 16 14"><path d="M8 1 C4.2 1 1.2 3.3 1.2 6.2 C1.2 7.7 2 9 3.2 9.9 L2.2 12.6 L5.6 11.1 C6.4 11.3 7.2 11.4 8 11.4 C11.8 11.4 14.8 9.1 14.8 6.2 C14.8 3.3 11.8 1 8 1Z" fill="#dcdcdc"/><circle cx="5" cy="6.2" r="0.9" fill="#0040c4"/><circle cx="8" cy="6.2" r="0.9" fill="#0040c4"/><circle cx="11" cy="6.2" r="0.9" fill="#0040c4"/></svg>
</body></html>
